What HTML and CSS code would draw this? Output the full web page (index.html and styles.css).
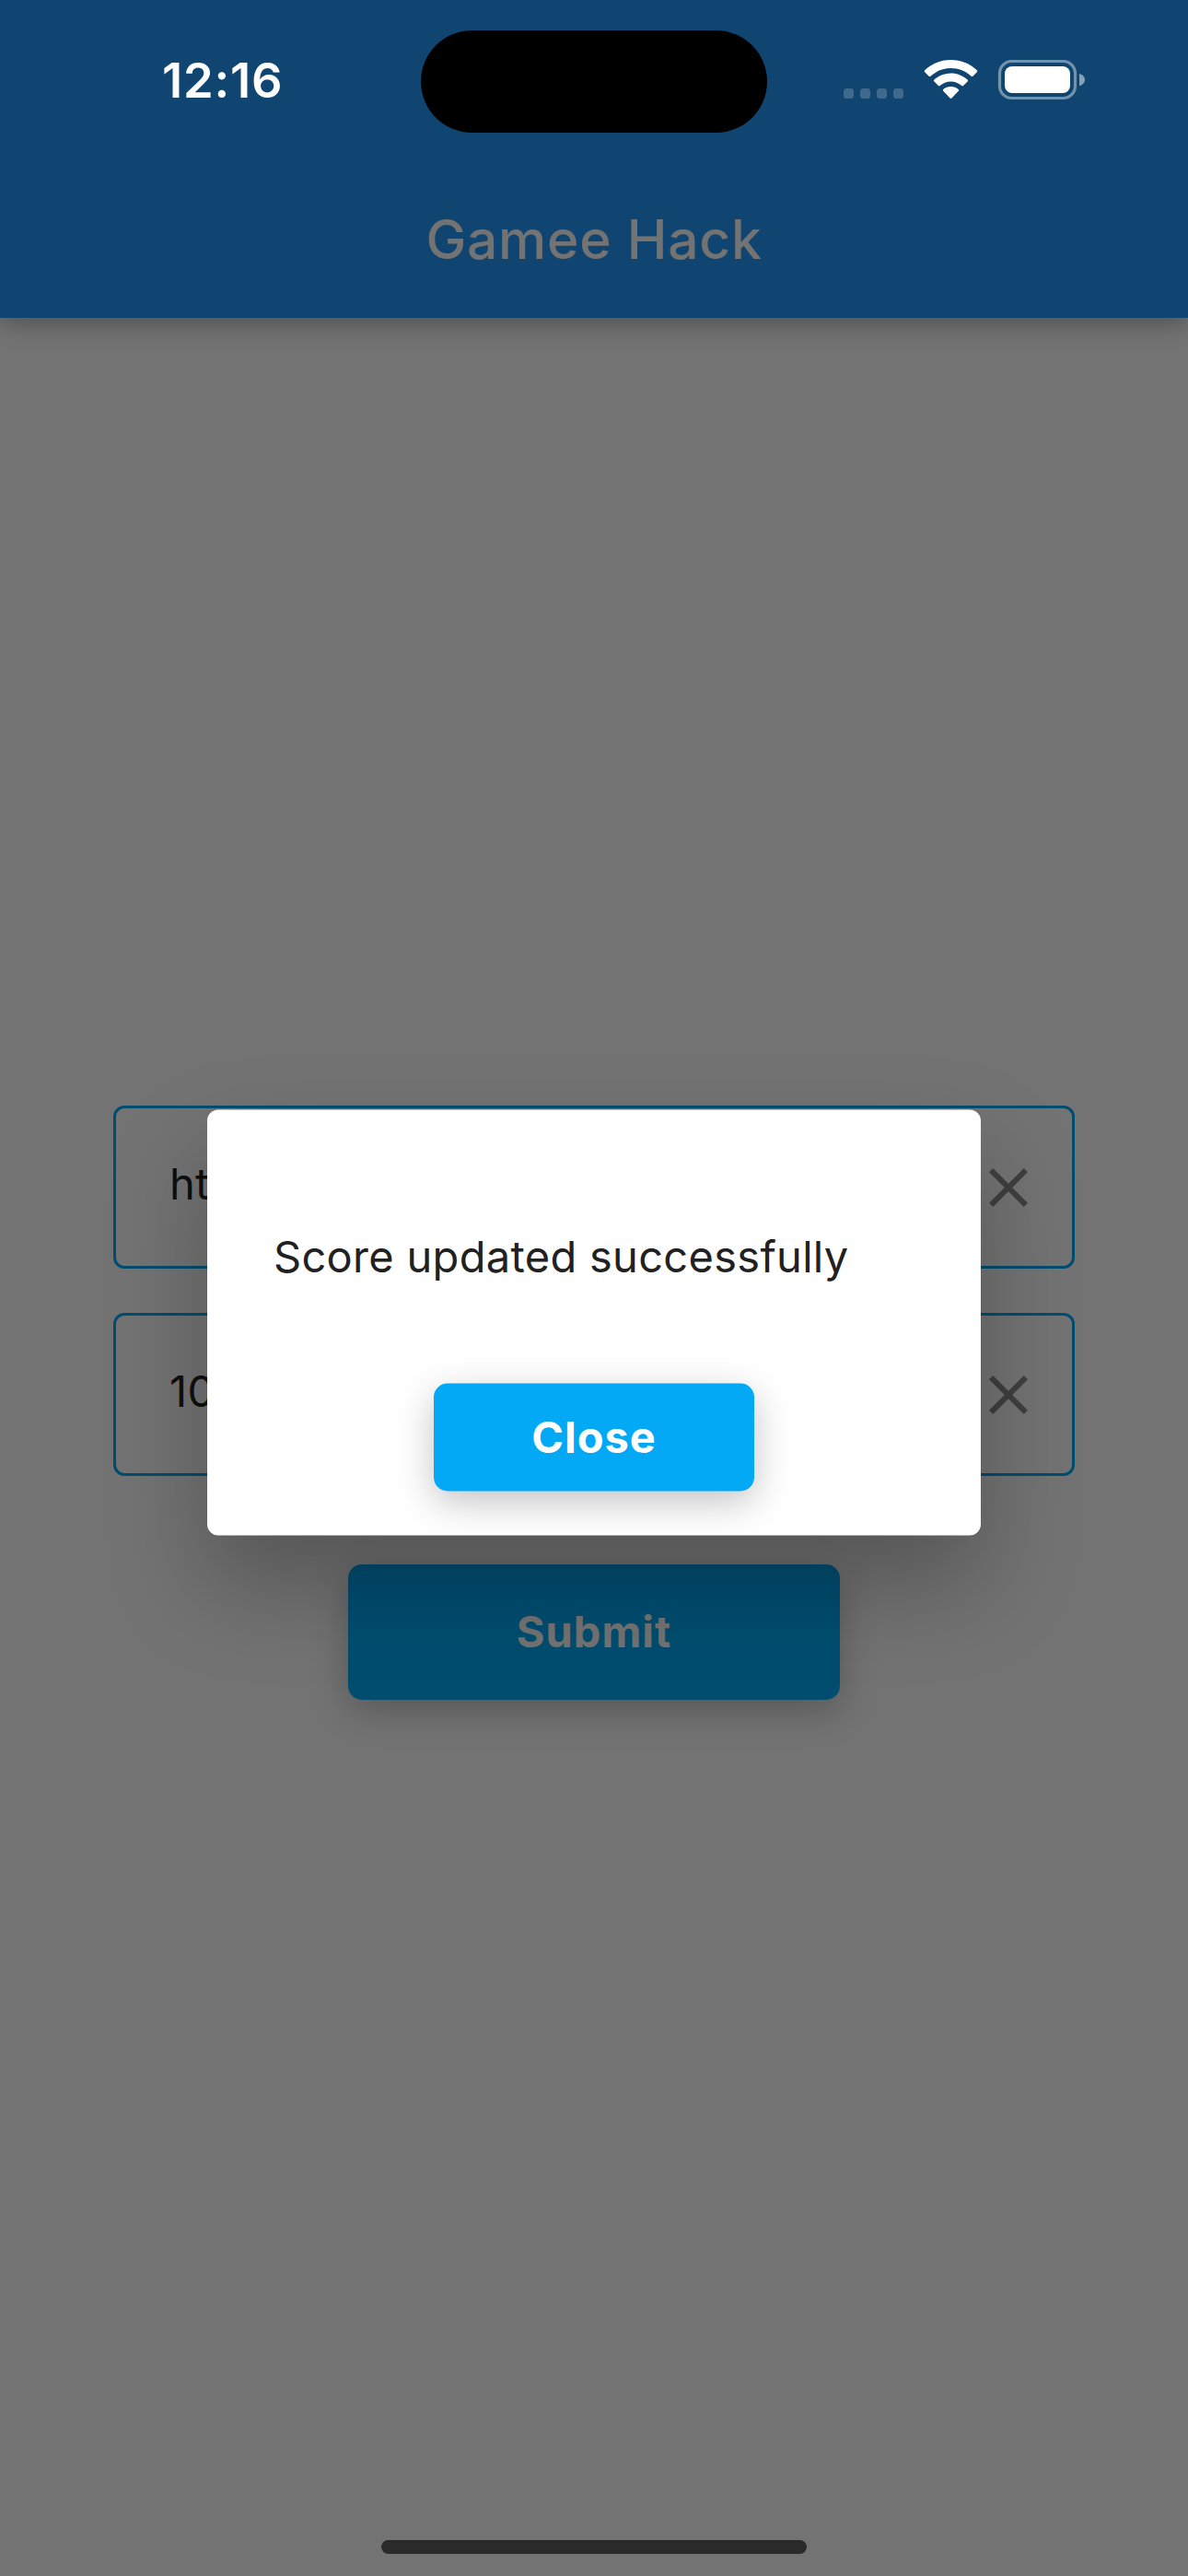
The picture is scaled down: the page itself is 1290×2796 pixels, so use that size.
FILE: index.html
```html
<!DOCTYPE html>
<html lang="en">
<head>
<meta charset="utf-8">
<title>Gamee Hack</title>
<link rel="stylesheet" href="styles.css">
</head>
<body>
<div class="app">
  <header class="app-bar"><h1 class="title">Gamee Hack</h1></header>
  <main class="form">
    <div class="field">
      <span class="field-text">ht</span>
      <svg class="clear" viewBox="0 0 24 24"><path d="M19 6.41L17.59 5 12 10.59 6.41 5 5 6.41 10.59 12 5 17.59 6.41 19 12 13.41 17.59 19 19 17.59 13.41 12z"/></svg>
    </div>
    <div class="field">
      <span class="field-text">10</span>
      <svg class="clear" viewBox="0 0 24 24"><path d="M19 6.41L17.59 5 12 10.59 6.41 5 5 6.41 10.59 12 5 17.59 6.41 19 12 13.41 17.59 19 19 17.59 13.41 12z"/></svg>
    </div>
    <button class="button submit">Submit</button>
  </main>
</div>
<div class="scrim">
  <section class="dialog" role="dialog">
    <p class="message">Score updated successfully</p>
    <button class="button close">Close</button>
  </section>
</div>
<div class="status-bar">
  <div class="time">12:16</div>
  <div class="island"></div>
  <svg class="status-icons" viewBox="0 0 264 44" fill="#fff">
    <g opacity=".2">
      <rect x="0" y="31" width="11" height="11" rx="3.5"/>
      <rect x="18" y="31" width="11" height="11" rx="3.5"/>
      <rect x="36" y="31" width="11" height="11" rx="3.5"/>
      <rect x="54" y="31" width="11" height="11" rx="3.5"/>
    </g>
    <path d="M116.500 0C105.500 0 95.500 4.200 88.200 11.300Q87.300 12.200 88.200 13.200L92.600 17.700Q93.500 18.500 94.400 17.700C100.200 12.200 108 9 116.500 9S132.800 12.200 138.600 17.700Q139.500 18.500 140.400 17.700L144.800 13.200Q145.700 12.200 144.800 11.300C137.500 4.200 127.500 0 116.500 0Z"/>
    <path d="M116.500 14.500C109.500 14.500 103.200 17.200 98.400 21.600Q97.500 22.500 98.400 23.400L103 28Q103.800 28.800 104.700 28C107.900 25.100 112 23.400 116.500 23.400S125.100 25.100 128.300 28Q129.200 28.800 130 28L134.600 23.400Q135.500 22.500 134.600 21.600C129.800 17.200 123.500 14.500 116.500 14.500Z"/>
    <path d="M116.500 29C113.300 29 110.400 30.100 108.200 32Q107.300 32.900 108.200 33.800L115.600 41.500Q116.500 42.400 117.400 41.500L124.800 33.800Q125.700 32.900 124.800 32C122.600 30.100 119.700 29 116.500 29Z"/>
    <rect x="169.500" y="1.500" width="82" height="40" rx="13" fill="none" stroke="#fff" stroke-width="3.200" opacity=".42"/>
    <rect x="175" y="7" width="71" height="29" rx="8"/>
    <path d="M256 15C259.500 15.800 262 18.500 262 21.600S259.500 27.400 256 28.200Z" opacity=".5"/>
  </svg>
</div>
<div class="home-indicator"></div>
</body>
</html>
```
FILE: styles.css
```css
* { box-sizing: border-box; }

body {
  position: relative;
  width: 1290px;
  height: 2796px;
  margin: 0;
  overflow: hidden;
  background: #fafafa;
  font-family: Inter, "Liberation Sans", sans-serif;
}

.app { display: flex; flex-direction: column; height: 100%; }

.app-bar {
  display: flex;
  align-items: center;
  justify-content: center;
  height: 345px;
  padding: 177px 0 3px;
  background: #2196f3;
  box-shadow: 0 6px 24px rgba(0, 0, 0, .3);
}

.title {
  margin: 0;
  color: #fafafa;
  font-size: 58.7px;
  font-weight: 500;
  letter-spacing: .75px;
  white-space: nowrap;
}

.form {
  display: flex;
  flex-direction: column;
  align-items: center;
  gap: 48px;
  padding: 855px 123px 0;
}

.field {
  display: flex;
  align-items: center;
  justify-content: space-between;
  width: 100%;
  height: 177px;
  padding: 0 33px 0 58px;
  border: 3px solid #03a9f4;
  border-radius: 12px;
}

.field-text {
  padding-bottom: 9px;
  color: #212121;
  font-size: 47px;
  letter-spacing: .3px;
}

.clear { width: 72px; height: 72px; fill: rgba(0, 0, 0, .45); }

.button {
  display: flex;
  align-items: center;
  justify-content: center;
  padding: 0 0 2px;
  border: 0;
  border-radius: 15px;
  background: #03a9f4;
  box-shadow: 0 12px 40px rgba(0, 0, 0, .24);
  color: #fff;
  font-family: inherit;
  font-size: 47px;
  font-weight: 700;
  letter-spacing: 1px;
}

.submit { width: 534px; height: 147px; margin-top: 48px; color: #fafafa; }

.scrim {
  position: absolute;
  inset: 0;
  display: flex;
  flex-direction: column;
  align-items: center;
  padding-top: 1204px;
  background: rgba(0, 0, 0, .54);
}

.dialog {
  display: flex;
  flex-direction: column;
  align-items: center;
  justify-content: space-between;
  width: 840px;
  height: 462px;
  padding: 129px 72px 48px;
  border-radius: 12px;
  background: #fff;
  box-shadow: 0 52px 104px rgba(0, 0, 0, .26);
  transform: translateY(.5px);
}

.message {
  align-self: flex-start;
  margin: 0;
  color: #212121;
  font-size: 47px;
  line-height: 60px;
  letter-spacing: .3px;
  white-space: nowrap;
}

.close { width: 348px; height: 117px; }

.status-bar {
  position: absolute;
  inset: 0 0 auto;
  display: grid;
  grid-template-columns: 457px 376px 457px;
  align-items: center;
  height: 177px;
}

.time {
  padding: 0 0 3px 176px;
  color: #fff;
  font-size: 52.5px;
  font-weight: 600;
  letter-spacing: .8px;
}

.island { height: 111px; border-radius: 56px; background: #000; }

.status-icons { width: 264px; height: 44px; margin: -3px 0 0 83px; }

.home-indicator {
  position: absolute;
  left: 414px;
  bottom: 24px;
  width: 462px;
  height: 15px;
  border-radius: 8px;
  background: #2a2a2a;
}
```
